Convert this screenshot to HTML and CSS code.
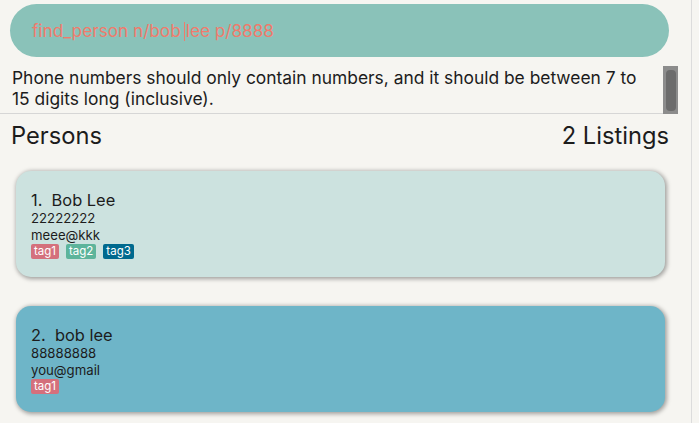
FILE: index.html
```html
<!DOCTYPE html>
<html>
<head>
<meta charset="utf-8">
<link rel="stylesheet" href="styles.css">
</head>
<body>
<div class="app">
  <div class="main">
    <div class="command-wrap">
      <div class="command">find_person n/bob<span class="caret"></span>lee p/8888</div>
    </div>
    <div class="result">
      <div class="result-text">Phone numbers should only contain numbers, and it should be between 7 to 15 digits long (inclusive).</div>
      <div class="scrollbar"><div class="thumb"></div></div>
    </div>
    <div class="list-header">
      <span class="title">Persons</span>
      <span class="count">2 Listings</span>
    </div>
    <div class="list">
      <div class="card card-light">
        <div class="name">1.&nbsp;&nbsp;Bob Lee</div>
        <div class="field">22222222</div>
        <div class="field">meee@kkk</div>
        <div class="tags">
          <span class="tag tag-red">tag1</span>
          <span class="tag tag-green">tag2</span>
          <span class="tag tag-blue">tag3</span>
        </div>
      </div>
      <div class="card card-dark">
        <div class="name">2.&nbsp;&nbsp;bob lee</div>
        <div class="field">88888888</div>
        <div class="field">you@gmail</div>
        <div class="tags">
          <span class="tag tag-red">tag1</span>
        </div>
      </div>
    </div>
  </div>
</div>
</body>
</html>
```
FILE: styles.css
```css
html, body {
  margin: 0;
  padding: 0;
  background: #f6f5f1;
}
body {
  font-family: Inter, "Open Sans", sans-serif;
  color: #1c1c1c;
  width: 699px;
  height: 423px;
  overflow: hidden;
}
.app {
  display: flex;
  height: 423px;
}
.main {
  width: 691px;
  border-right: 1px solid #dcdcdc;
  display: flex;
  flex-direction: column;
}
.command-wrap {
  padding: 4px 22px 0 10px;
}
.command {
  height: 53px;
  border-radius: 27px;
  background: #8ac2b9;
  color: #f07b6c;
  font-size: 17.2px;
  line-height: 53px;
  padding-left: 22px;
  box-sizing: border-box;
}
.caret {
  display: inline-block;
  width: 1px;
  height: 19px;
  background: #f07b6c;
  vertical-align: -4px;
  margin: 0 1px 0 3px;
}
.result {
  margin-top: 6px;
  height: 50px;
  border-bottom: 1px solid #d6d6d6;
  margin-right: 13px;
  display: flex;
  justify-content: space-between;
}
.result-text {
  padding: 4px 0 0 12px;
  font-size: 17.4px;
  line-height: 21px;
  width: 628px;
}
.scrollbar {
  width: 15px;
  height: 48px;
  margin-top: 3px;
  background: #8c8c8c;
  display: flex;
  justify-content: center;
  padding-top: 4px;
  box-sizing: border-box;
}
.thumb {
  width: 10px;
  height: 41px;
  border-radius: 4px;
  background: #6c6c6c;
}
.list-header {
  display: flex;
  justify-content: space-between;
  padding: 7px 22px 0 11px;
  font-size: 23.7px;
  line-height: 30px;
}
.list {
  padding: 20px 26px 0 16px;
  display: flex;
  flex-direction: column;
  gap: 29px;
}
.card {
  height: 106px;
  border-radius: 15px;
  box-shadow: 1px 1px 4px 1px rgba(0,0,0,0.35);
  padding: 20px 15px 0 15px;
  box-sizing: border-box;
}
.card-light { background: #cce2df; }
.card-dark { background: #6eb5c8; }
.name {
  font-size: 16.4px;
  line-height: 19px;
}
.field {
  font-size: 13.2px;
  line-height: 17px;
}
.tags {
  display: flex;
  gap: 7px;
  margin-top: 0;
}
.tag {
  font-size: 11.5px;
  line-height: 15px;
  color: #fff;
  padding: 0 3px;
  border-radius: 2px;
}
.tag-red { background: #d4707c; }
.tag-green { background: #5db49b; }
.tag-blue { background: #00698e; }
```
